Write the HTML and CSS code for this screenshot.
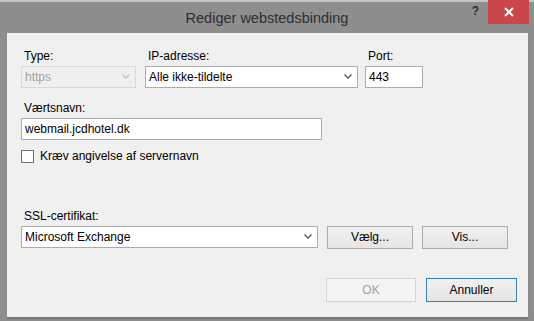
FILE: index.html
```html
<!DOCTYPE html>
<html lang="da">
<head>
  <meta charset="UTF-8" />
  <title>Rediger webstedsbinding</title>
  <link rel="stylesheet" href="styles.css">
</head>
<body>

<div class="window">
  <div class="titlebar">
    <div></div>
    <div class="title">Rediger webstedsbinding</div>
    <div class="caption">
      <span class="help">?</span>
      <span class="close">
        <svg width="10" height="10" viewBox="0 0 10 10"><path d="M1 1 L9 9 M9 1 L1 9" stroke="#fff" stroke-width="2"/></svg>
      </span>
    </div>
  </div>

  <div class="client">
    <div class="row-top">
      <div class="field">
        <label>Type:</label>
        <div class="select type-select disabled">
          <span>https</span>
          <svg width="8" height="5" viewBox="0 0 8 5"><path d="M0.5 0.5 L4 4 L7.5 0.5" fill="none" stroke="#c4c4c4" stroke-width="1.4"/></svg>
        </div>
      </div>
      <div class="field">
        <label>IP-adresse:</label>
        <div class="select ip-select">
          <span>Alle ikke-tildelte</span>
          <svg width="8" height="5" viewBox="0 0 8 5"><path d="M0.5 0.5 L4 4 L7.5 0.5" fill="none" stroke="#5a5a5a" stroke-width="1.4"/></svg>
        </div>
      </div>
      <div class="field">
        <label>Port:</label>
        <div class="input port-input">443</div>
      </div>
    </div>

    <div class="field host">
      <label>Værtsnavn:</label>
      <div class="input host-input">webmail.jcdhotel.dk</div>
    </div>

    <div class="check-row">
      <span class="checkbox"></span>
      <span>Kræv angivelse af servernavn</span>
    </div>

    <div class="field ssl">
      <label>SSL-certifikat:</label>
      <div class="ssl-row">
        <div class="select ssl-select">
          <span>Microsoft Exchange</span>
          <svg width="8" height="5" viewBox="0 0 8 5"><path d="M0.5 0.5 L4 4 L7.5 0.5" fill="none" stroke="#5a5a5a" stroke-width="1.4"/></svg>
        </div>
        <button class="btn small">Vælg...</button>
        <button class="btn small">Vis...</button>
      </div>
    </div>

    <div class="footer">
      <button class="btn ok" disabled>OK</button>
      <button class="btn cancel">Annuller</button>
    </div>
  </div>
</div>

</body>
</html>
```

FILE: styles.css
```css
body {
  margin: 0;
  font-family: 'Liberation Sans', Arial, sans-serif;
  font-size: 12px;
  color: #000;
  background: #8e8e8e;
}

.window {
  width: 534px;
  height: 321px;
  background: #8e8e8e;
  overflow: hidden;
}

.titlebar {
  height: 33px;
  display: grid;
  grid-template-columns: 1fr auto 1fr;
  background: linear-gradient(#c4c4c4 0, #c4c4c4 2px, #8e8e8e 2px);
}

.title {
  font-size: 14.5px;
  line-height: 33px;
  padding-top: 2px;
  color: #2e2e2e;
}

.caption {
  justify-self: end;
  display: flex;
  align-items: flex-start;
  padding-right: 5px;
}

.help {
  width: 13px;
  margin-right: 6px;
  margin-top: 4px;
  font-weight: bold;
  font-size: 12px;
  color: #2e2e2e;
  text-align: center;
}

.close {
  width: 41px;
  height: 24px;
  background: #c9474a;
  display: flex;
  align-items: center;
  justify-content: center;
}

.client {
  margin: 0 6px 0 7px;
  height: 284px;
  box-sizing: border-box;
  background: #f0f0f0;
  padding: 16px 0 0 14px;
  box-shadow: 0 2px 1px #767676;
}

.field label {
  display: block;
  line-height: 15px;
  margin-bottom: 2px;
  padding-left: 3px;
}

.row-top {
  display: grid;
  grid-template-columns: 124px 220px 58px;
}

.select,
.input {
  height: 22px;
  box-sizing: border-box;
  border: 1px solid #acacac;
  background: #fff;
  display: flex;
  align-items: center;
  justify-content: space-between;
  padding: 0 0 1px 3px;
  white-space: nowrap;
}

.select svg {
  margin-right: 5px;
}

.select.disabled {
  background: #efefef;
  border-color: #d9d9d9;
  color: #a3a3a3;
}

.type-select { width: 115px; }
.ip-select { width: 213px; }
.port-input { width: 58px; }

.host {
  margin-top: 13px;
}

.host-input {
  width: 301px;
}

.check-row {
  margin-top: 10px;
  display: flex;
  align-items: center;
  height: 13px;
  line-height: 13px;
}

.checkbox {
  width: 13px;
  height: 13px;
  box-sizing: border-box;
  border: 1px solid #707070;
  background: #fff;
  margin-right: 6px;
}

.ssl {
  margin-top: 46px;
}

.ssl-row {
  display: flex;
  align-items: flex-start;
}

.ssl-select {
  width: 297px;
}

.btn {
  font-family: inherit;
  font-size: 12px;
  color: #000;
  box-sizing: border-box;
  border: 1px solid #acacac;
  background: linear-gradient(#f0f0f0, #e5e5e5);
  padding: 0 0 1px 0;
}

.btn.small {
  width: 86px;
  height: 23px;
  margin-left: 9px;
}

.footer {
  margin-top: 29px;
  padding-right: 11px;
  display: flex;
  justify-content: flex-end;
  gap: 10px;
}

.footer .btn {
  height: 24px;
}

.btn.ok {
  width: 90px;
  border-color: #d5d5d5;
  background: #f4f4f4;
  color: #a3a3a3;
}

.btn.cancel {
  width: 91px;
  border-color: #3c7fb1;
}
```
